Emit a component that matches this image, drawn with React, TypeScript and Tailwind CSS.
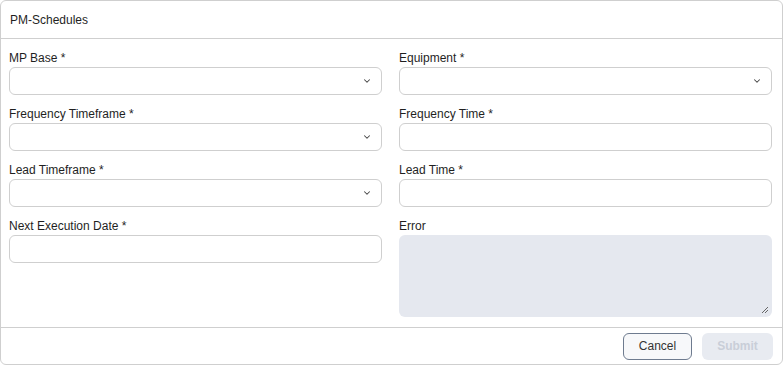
import { ChevronDown } from 'lucide-react'

const FIELDS = [
  { left: { label: 'MP Base *', kind: 'select' }, right: { label: 'Equipment *', kind: 'select' } },
  { left: { label: 'Frequency Timeframe *', kind: 'select' }, right: { label: 'Frequency Time *', kind: 'input' } },
  { left: { label: 'Lead Timeframe *', kind: 'select' }, right: { label: 'Lead Time *', kind: 'input' } },
]

function Field({ label, kind }: { label: string; kind: string }) {
  return (
    <div className="flex min-w-0 flex-col gap-[1px]">
      <label className="text-[12px] leading-[16px] text-[#1f1f1f]">{label}</label>
      <div className="relative h-[28px] rounded-[6px] border border-[#cfcfcf] bg-white">
        {kind === 'select' && (
          <ChevronDown
            className="absolute right-[9px] top-[8px] text-[#444]"
            size={10}
            strokeWidth={2.5}
          />
        )}
      </div>
    </div>
  )
}

export default function App() {
  return (
    <div className="w-[783px] h-[366px] bg-white" style={{ fontFamily: '"Liberation Sans", Arial, sans-serif' }}>
      <div className="flex h-[365px] flex-col rounded-[6px] border border-[#cfcfcf]">
        {/* Header */}
        <div className="flex h-[38px] shrink-0 items-center border-b border-[#cfcfcf] px-[9px] text-[12px] text-[#1f1f1f]">
          PM-Schedules
        </div>

        {/* Body */}
        <div className="flex-1 pl-[8px] pt-[11px]">
          <div className="grid grid-cols-[373px_373px] gap-x-[17px] gap-y-[11px]">
            {FIELDS.map((row, i) => (
              <div key={i} className="contents">
                <Field label={row.left.label} kind={row.left.kind} />
                <Field label={row.right.label} kind={row.right.kind} />
              </div>
            ))}
            <Field label="Next Execution Date *" kind="input" />
            <div className="flex min-w-0 flex-col gap-[1px]">
              <label className="text-[12px] leading-[16px] text-[#1f1f1f]">Error</label>
              <div className="relative h-[82px] w-[373px] rounded-[6px] bg-[#e5e8ef]">
                {/* resize grip */}
                <svg className="absolute bottom-[3px] right-[3px]" width="8" height="8" viewBox="0 0 8 8">
                  <path d="M7 1 L1 7 M7 4 L4 7" stroke="#666" strokeWidth="1" />
                </svg>
              </div>
            </div>
          </div>
        </div>

        {/* Footer */}
        <div className="flex h-[37px] shrink-0 items-center justify-end gap-[10px] border-t border-[#cfcfcf] px-[9px]">
          <button className="h-[27px] w-[69px] rounded-[6px] border border-[#6e7b8f] bg-[#f7f8fa] text-[12px] text-[#333]">
            Cancel
          </button>
          <button className="h-[27px] w-[71px] rounded-[6px] bg-[#e8ebf1] text-[12px] font-bold text-[#c9ced8]">
            Submit
          </button>
        </div>
      </div>
    </div>
  )
}
